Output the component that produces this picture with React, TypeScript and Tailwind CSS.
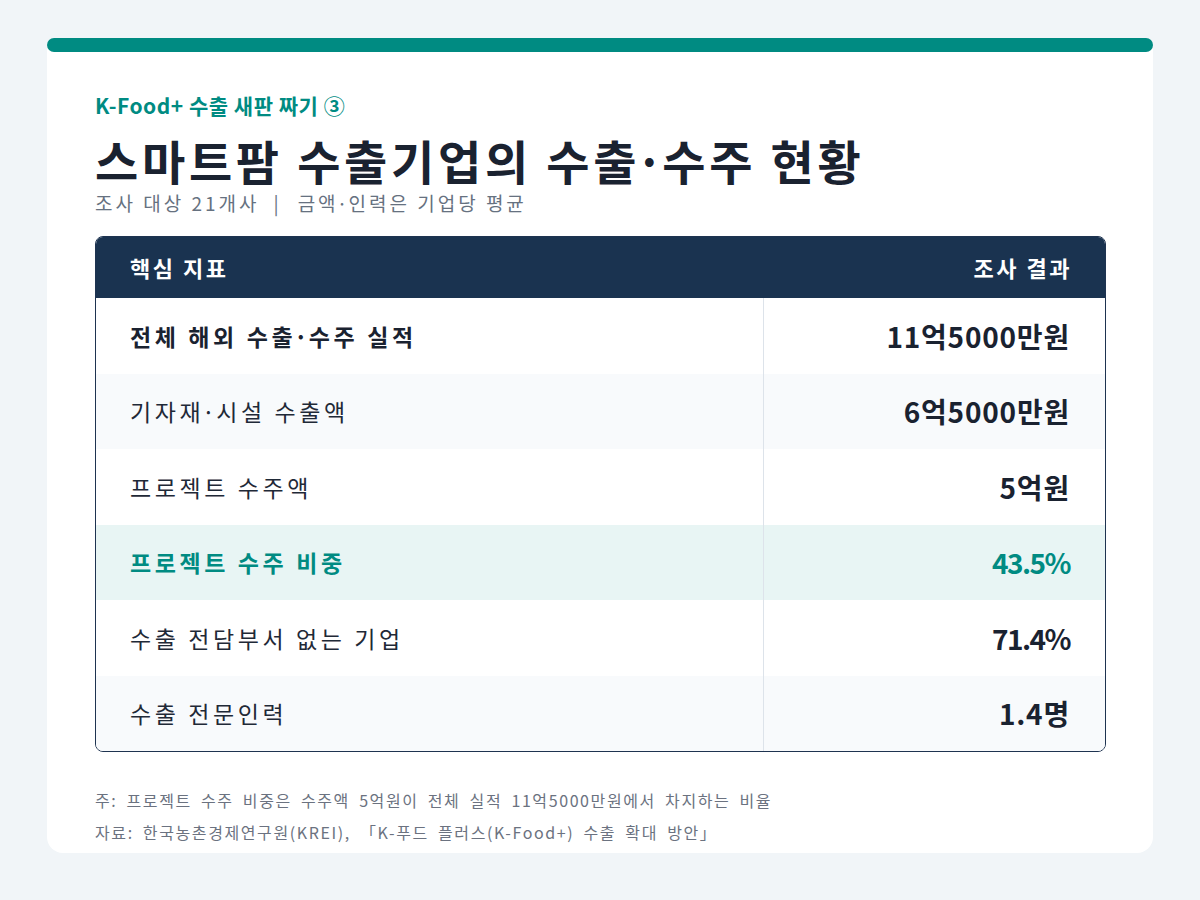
import React from "react";

const FONT = { fontFamily: '"Noto Sans CJK KR", "Noto Sans", sans-serif' };

type Row = { label: React.ReactNode; value: string; kind: "bold" | "normal" | "accent"; bg: string; pct?: boolean };

function Dot() {
  return <span className="-mx-[0.1em]">·</span>;
}

const rows: Row[] = [
  { label: <>전체 해외 수출<Dot />수주 실적</>, value: "11억5000만원", kind: "bold", bg: "bg-white" },
  { label: <>기자재<Dot />시설 수출액</>, value: "6억5000만원", kind: "normal", bg: "bg-[#f8fafc]" },
  { label: "프로젝트 수주액", value: "5억원", kind: "normal", bg: "bg-white" },
  { label: "프로젝트 수주 비중", value: "43.5%", kind: "accent", bg: "bg-[#e8f5f4]", pct: true },
  { label: "수출 전담부서 없는 기업", value: "71.4%", kind: "normal", bg: "bg-white", pct: true },
  { label: "수출 전문인력", value: "1.4명", kind: "normal", bg: "bg-[#f8fafc]" },
];

export default function App() {
  return (
    <div className="w-[1200px] h-[900px] bg-[#f1f5f8] pt-[38px] px-[47px]" style={FONT}>
      <div className="flex flex-col">
        <div className="relative z-10 h-[14px] rounded-full bg-[#008b82]" />
        <div className="-mt-[7px] bg-white rounded-b-[16px] pl-[48px] pr-[47px] pt-[46px] pb-[9px]">
          <div className="h-[28px] text-[21px] leading-[28px] font-bold text-[#008b82] tracking-[0.5px]">
            K-Food+ 수출 새판 짜기 ③
          </div>
          <div className="mt-[13px] h-[56px] text-[47px] leading-[56px] font-bold text-[#1a2230] tracking-[3.7px]">
            스마트팜 수출기업의 수출<Dot />수주 현황
          </div>
          <div className="mt-[3px] h-[24px] text-[19px] leading-[24px] text-[#667180] flex items-center tracking-[3px]">
            <span>조사 대상 21개사</span>
            <span className="ml-[14px] mr-[16px]">|</span>
            <span>
              금액<Dot />인력은 기업당 평균
            </span>
          </div>

          <div className="mt-[21px] border border-[#1e3350] rounded-[8px] overflow-hidden">
            <div className="h-[61px] bg-[#1a3350] flex items-center justify-between pl-[34px] pr-[33px] text-white text-[22px] font-bold tracking-[2.5px]">
              <span>핵심 지표</span>
              <span>조사 결과</span>
            </div>
            {rows.map((r, i) => (
              <div key={i} className={`flex h-[75.5px] ${r.bg}`}>
                <div
                  className={`w-[667px] flex items-center pl-[34px] text-[23px] tracking-[3.6px] ${
                    r.kind === "bold"
                      ? "font-bold text-[#1a2230]"
                      : r.kind === "accent"
                      ? "font-bold text-[#008b82]"
                      : "text-[#1f2937]"
                  }`}
                >
                  {r.label}
                </div>
                <div className="w-px bg-[#dde3ea]" />
                <div
                  className={`flex-1 flex items-center justify-end pr-[35px] text-[28px] font-bold ${
                    r.pct ? "tracking-[-1.5px]" : "tracking-[0.8px]"
                  } ${r.kind === "accent" ? "text-[#008b82]" : "text-[#1a2230]"}`}
                >
                  {r.value}
                </div>
              </div>
            ))}
          </div>

          <div className="mt-[36px] text-[16px] leading-[24px] text-[#6b7280] flex flex-col gap-[8px] tracking-[1.6px] [word-spacing:4px]">
            <div className="h-[24px]">주: 프로젝트 수주 비중은 수주액 5억원이 전체 실적 11억5000만원에서 차지하는 비율</div>
            <div className="h-[24px]">자료: 한국농촌경제연구원(KREI), 「K-푸드 플러스(K-Food+) 수출 확대 방안」</div>
          </div>
        </div>
      </div>
    </div>
  );
}
